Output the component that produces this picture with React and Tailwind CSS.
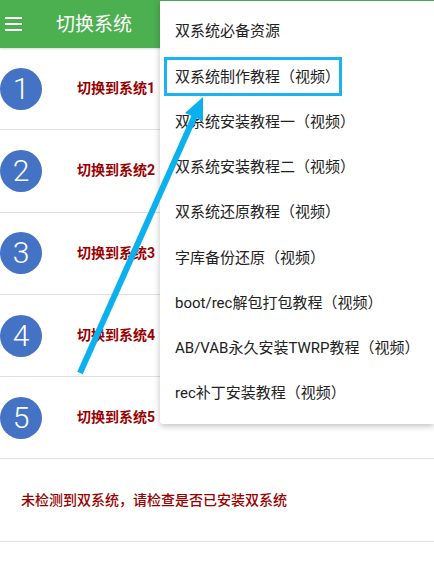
import React from "react";

const rows = [1, 2, 3, 4, 5];
const menu = [
  "双系统必备资源",
  "双系统制作教程（视频）",
  "双系统安装教程一（视频）",
  "双系统安装教程二（视频）",
  "双系统还原教程（视频）",
  "字库备份还原（视频）",
  "boot/rec解包打包教程（视频）",
  "AB/VAB永久安装TWRP教程（视频）",
  "rec补丁安装教程（视频）",
];

export default function App() {
  return (
    <div
      className="relative w-[434px] h-[573px] overflow-hidden bg-white"
      style={{ fontFamily: '"Roboto", "Noto Sans CJK SC", sans-serif' }}
    >
      <div className="h-[48px] bg-[#4caf50] flex items-center shadow-[0_1px_2px_rgba(0,0,0,0.15)]">
        <div className="ml-[5px] w-[17px] flex flex-col gap-[4px]">
          <div className="h-[2px] bg-white" />
          <div className="h-[2px] bg-white" />
          <div className="h-[2px] bg-white" />
        </div>
        <div className="ml-[34px] text-white text-[19px] leading-none">切换系统</div>
      </div>

      {rows.map((n) => (
        <div key={n} className="h-[82.3px] flex items-center border-b border-[#e0e0e0]">
          <div className="w-[42px] h-[42px] rounded-full bg-[#4472c4] flex items-center justify-center text-white text-[30px] font-light leading-none">
            {n}
          </div>
          <div className="ml-[35px] text-[#990000] text-[14px] font-bold">切换到系统{n}</div>
        </div>
      ))}
      <div className="h-[83px] flex items-center border-b border-[#e0e0e0] pl-[21px]">
        <div className="text-[#990000] text-[14px] font-medium">未检测到双系统，请检查是否已安装双系统</div>
      </div>

      <div className="absolute left-[160px] top-[1px] w-[274px] bg-white py-[8px] shadow-[0_2px_6px_rgba(0,0,0,0.25)] rounded-bl-[3px]">
        {menu.map((m, i) => (
          <div key={i} className="h-[45.25px] flex items-center pl-[15px] text-[15px] text-[#212121]">
            {m}
          </div>
        ))}
      </div>

      <div className="absolute left-[164px] top-[57px] w-[178px] h-[39px] border-[3px] border-[#1ab2f0]" />

      <svg className="absolute left-0 top-0" width="434" height="573" viewBox="0 0 434 573">
        <line x1="80" y1="373" x2="196" y2="113" stroke="#0bb0ee" strokeWidth="6" />
        <polygon points="203,97 203,121 185,113" fill="#0bb0ee" />
      </svg>
    </div>
  );
}
